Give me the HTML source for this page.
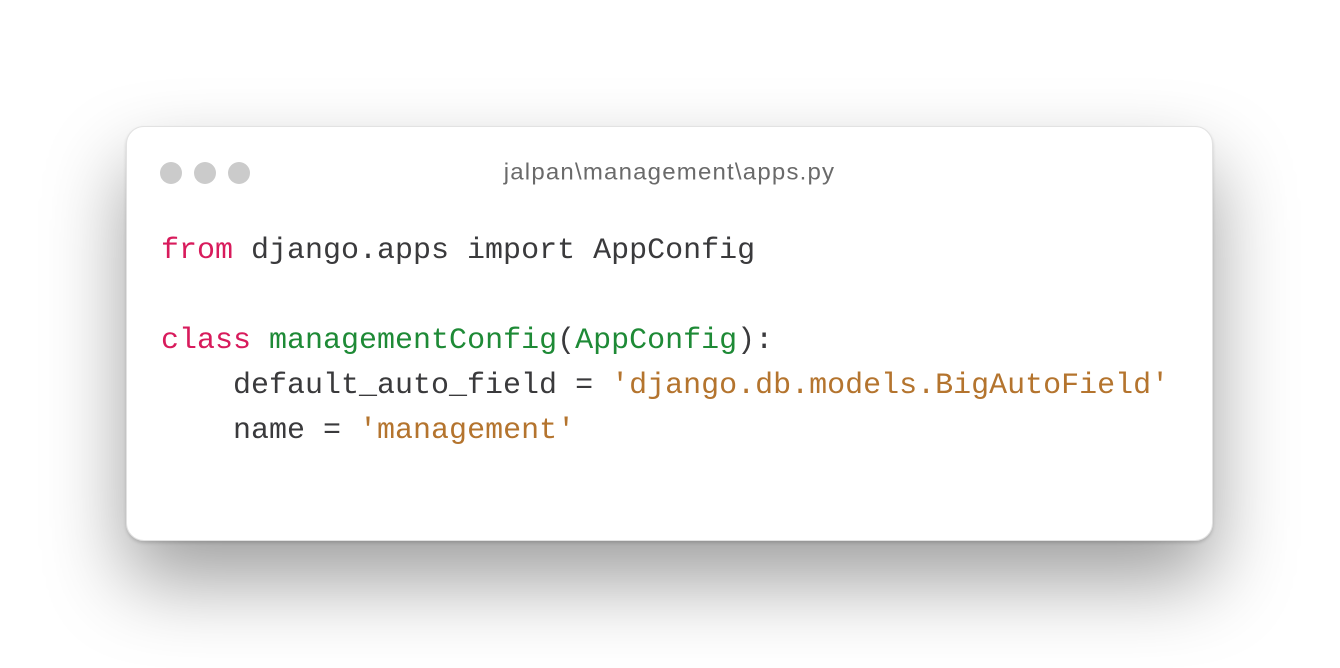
<!DOCTYPE html>
<html><head><meta charset="utf-8"><style>
html,body{margin:0;padding:0;width:1340px;height:668px;overflow:hidden;background:#fff;}
.card{position:absolute;left:126px;top:126px;width:1087px;height:415px;background:#fff;border-radius:18px;border:1px solid #e2e2e2;box-sizing:border-box;box-shadow:0 40px 80px rgba(0,0,0,0.38),0 2px 3px rgba(0,0,0,0.15);}
.dot{position:absolute;top:35px;width:22px;height:22px;border-radius:50%;background:#cbcbcb;}
.title{position:absolute;left:0;right:0;top:32px;text-align:center;font:24px "Liberation Sans",sans-serif;letter-spacing:1.2px;color:#6a6a6a;transform:scaleY(0.95);}
pre{position:absolute;left:34px;top:102px;margin:0;font:30px/45px "Liberation Mono",monospace;color:#3a3a3c;}
.k{color:#d81b5c}.g{color:#1e8a36}.s{color:#b4742e}
</style></head><body>
<div class="card">
<div class="dot" style="left:33px"></div><div class="dot" style="left:67px"></div><div class="dot" style="left:101px"></div>
<div class="title">jalpan\management\apps.py</div>
<pre><span class="k">from</span> django.apps import AppConfig

<span class="k">class</span> <span class="g">managementConfig</span>(<span class="g">AppConfig</span>):
    default_auto_field = <span class="s">'django.db.models.BigAutoField'</span>
    name = <span class="s">'management'</span></pre>
</div>
</body></html>
